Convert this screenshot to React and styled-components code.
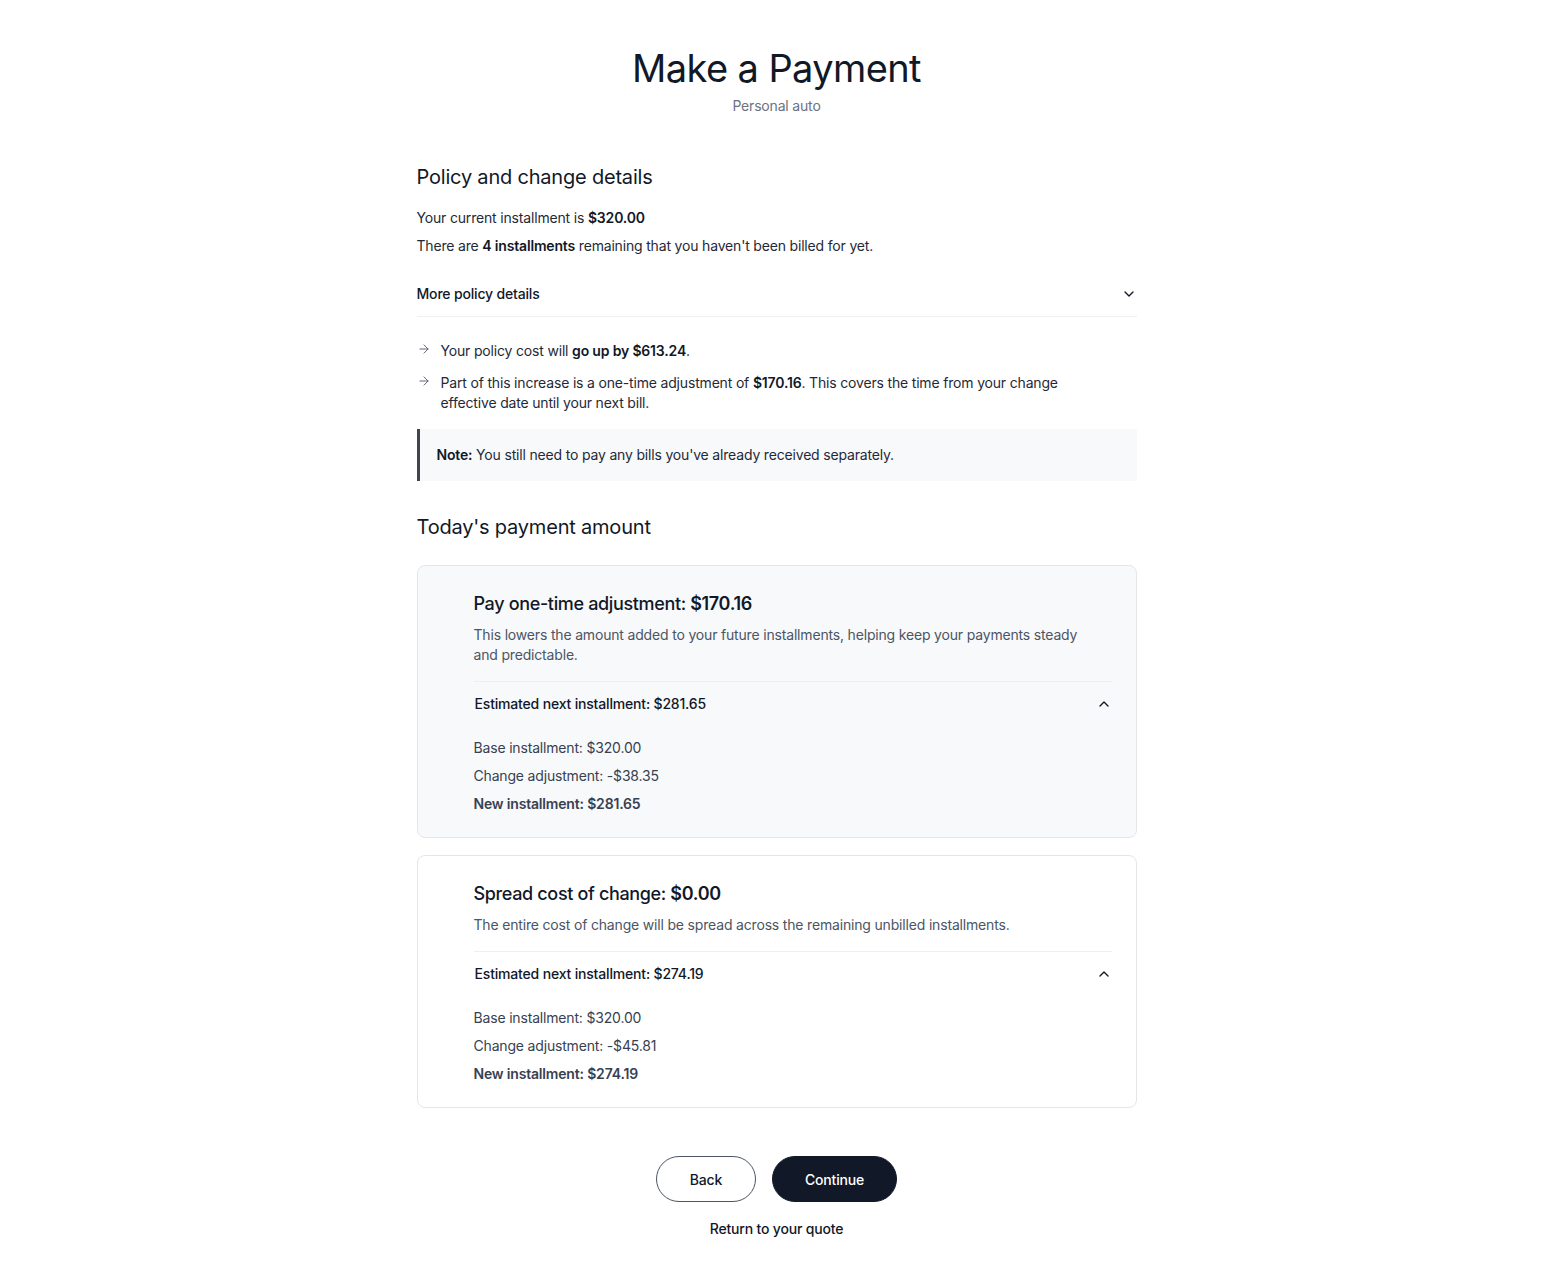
import React from "react";
import styled, { createGlobalStyle } from "styled-components";
import { ChevronDown, ChevronUp, ArrowRight } from "lucide-react";

const GlobalStyle = createGlobalStyle`
  body {
    margin: 0;
    background: #ffffff;
    font-family: Inter, "Noto Sans", Arial, sans-serif;
    color: #111827;
    letter-spacing: -0.011em;
    -webkit-font-smoothing: antialiased;
  }
`;

const options = [
  {
    label: "Pay one-time adjustment:",
    amount: "$170.16",
    text: "This lowers the amount added to your future installments, helping keep your payments steady and predictable.",
    estimate: "$281.65",
    base: "$320.00",
    change: "-$38.35",
    selected: true,
  },
  {
    label: "Spread cost of change:",
    amount: "$0.00",
    text: "The entire cost of change will be spread across the remaining unbilled installments.",
    estimate: "$274.19",
    base: "$320.00",
    change: "-$45.81",
    selected: false,
  },
];

const App = () => {
  return (
    <>
      <GlobalStyle />
      <Page>
        <Header>
          <Title>Make a Payment</Title>
          <Subtitle>Personal auto</Subtitle>
        </Header>

        <Section>
          <SectionTitle>Policy and change details</SectionTitle>
          <Lines>
            <Line>
              Your current installment is <b>$320.00</b>
            </Line>
            <Line>
              There are <b>4 installments</b> remaining that you haven't been
              billed for yet.
            </Line>
          </Lines>
          <Disclosure>
            More policy details
            <ChevronDown size={16} strokeWidth={2} color="#111827" />
          </Disclosure>
          <Bullets>
            <Bullet>
              <ArrowRight size={14} strokeWidth={1.5} color="#4b5563" />
              <span>
                Your policy cost will <b>go up by $613.24</b>.
              </span>
            </Bullet>
            <Bullet>
              <ArrowRight size={14} strokeWidth={1.5} color="#4b5563" />
              <span>
                Part of this increase is a one-time adjustment of{" "}
                <b>$170.16</b>. This covers the time from your change effective
                date until your next bill.
              </span>
            </Bullet>
          </Bullets>
          <Note>
            <b>Note:</b> You still need to pay any bills you've already
            received separately.
          </Note>
        </Section>

        <Section $gap={32}>
          <SectionTitle>Today's payment amount</SectionTitle>
          <Cards>
            {options.map((o) => (
              <Card key={o.label} $selected={o.selected}>
                <CardTitle>
                  {o.label} <strong>{o.amount}</strong>
                </CardTitle>
                <CardText>{o.text}</CardText>
                <EstimateToggle>
                  Estimated next installment: {o.estimate}
                  <ChevronUp size={16} strokeWidth={2} color="#111827" />
                </EstimateToggle>
                <Breakdown>
                  <BreakdownItem>Base installment: {o.base}</BreakdownItem>
                  <BreakdownItem>Change adjustment: {o.change}</BreakdownItem>
                  <BreakdownItem $bold>
                    New installment: {o.estimate}
                  </BreakdownItem>
                </Breakdown>
              </Card>
            ))}
          </Cards>
        </Section>

        <Actions>
          <Buttons>
            <Button>Back</Button>
            <Button $primary>Continue</Button>
          </Buttons>
          <TextLink>Return to your quote</TextLink>
        </Actions>
      </Page>
    </>
  );
};

const Page = styled.main`
  width: 720px;
  margin: 0 auto;
  padding: 44px 0 40px;
  display: flex;
  flex-direction: column;
`;

const Header = styled.header`
  display: flex;
  flex-direction: column;
  align-items: center;
  gap: 4px;
  margin-bottom: 47px;
`;

const Title = styled.h1`
  margin: 0;
  font-size: 38px;
  line-height: 48px;
  font-weight: 400;
  letter-spacing: -0.6px;
  color: #111827;
`;

const Subtitle = styled.p`
  margin: 0;
  font-size: 14px;
  line-height: 20px;
  color: #6b7280;
`;

const Section = styled.section`
  display: flex;
  flex-direction: column;
  margin-top: ${(p) => (p.$gap ? p.$gap : 0)}px;
`;

const SectionTitle = styled.h2`
  margin: 0;
  font-size: 20px;
  line-height: 28px;
  font-weight: 400;
  letter-spacing: -0.2px;
  color: #111827;
`;

const Lines = styled.div`
  display: flex;
  flex-direction: column;
  gap: 8px;
  margin-top: 17px;
`;

const Line = styled.p`
  margin: 0;
  font-size: 14px;
  line-height: 20px;
  color: #1f2937;
  b {
    font-weight: 600;
    color: #111827;
  }
`;

const Disclosure = styled.div`
  display: flex;
  align-items: center;
  justify-content: space-between;
  margin-top: 16px;
  padding: 12px 0;
  font-size: 14px;
  line-height: 20px;
  font-weight: 500;
  color: #111827;
  border-bottom: 1px solid #f0f1f3;
`;

const Bullets = styled.ul`
  list-style: none;
  margin: 24px 0 0;
  padding: 0;
  display: flex;
  flex-direction: column;
  gap: 12px;
`;

const Bullet = styled.li`
  display: flex;
  align-items: flex-start;
  gap: 10px;
  font-size: 14px;
  line-height: 20px;
  color: #1f2937;
  svg {
    flex: none;
    margin-top: 1px;
  }
  span {
    padding-right: 60px;
  }
  b {
    font-weight: 600;
    color: #111827;
  }
`;

const Note = styled.div`
  margin-top: 16px;
  padding: 16px 16px 16px 17px;
  background: #f8f9fb;
  border-left: 3px solid #3f4651;
  font-size: 14px;
  line-height: 20px;
  color: #1f2937;
  b {
    font-weight: 600;
    color: #111827;
  }
`;

const Cards = styled.div`
  display: flex;
  flex-direction: column;
  gap: 17px;
  margin-top: 24px;
`;

const Card = styled.div`
  display: flex;
  flex-direction: column;
  padding: 24px 24px 23px 56px;
  border: 1px solid #e4e6ea;
  border-radius: 8px;
  background: ${(p) => (p.$selected ? "#f8f9fb" : "#ffffff")};
`;

const CardTitle = styled.h3`
  margin: 0;
  font-size: 18px;
  line-height: 28px;
  font-weight: 500;
  letter-spacing: -0.35px;
  color: #111827;
  strong {
    font-weight: 600;
  }
`;

const CardText = styled.p`
  margin: 7px 0 0;
  padding-right: 20px;
  font-size: 14px;
  line-height: 20px;
  color: #4b5563;
`;

const EstimateToggle = styled.div`
  display: flex;
  align-items: center;
  justify-content: space-between;
  margin-top: 16px;
  padding: 12px 0 12px 1px;
  border-top: 1px solid #eceef1;
  font-size: 14px;
  line-height: 20px;
  font-weight: 500;
  color: #111827;
`;

const Breakdown = styled.div`
  display: flex;
  flex-direction: column;
  gap: 8px;
  margin-top: 12px;
`;

const BreakdownItem = styled.p`
  margin: 0;
  font-size: 14px;
  line-height: 20px;
  color: #374151;
  font-weight: ${(p) => (p.$bold ? 600 : 400)};
`;

const Actions = styled.div`
  display: flex;
  flex-direction: column;
  align-items: center;
  gap: 17px;
  margin-top: 48px;
`;

const Buttons = styled.div`
  display: flex;
  gap: 16px;
`;

const Button = styled.button`
  height: 46px;
  padding: 0 32px;
  min-width: ${(p) => (p.$primary ? 124 : 100)}px;
  border-radius: 999px;
  font-family: inherit;
  font-size: 14px;
  font-weight: 500;
  letter-spacing: inherit;
  cursor: pointer;
  border: ${(p) => (p.$primary ? "1.5px solid #111827" : "1.5px solid #4b5563")};
  background: ${(p) => (p.$primary ? "#111827" : "#ffffff")};
  color: ${(p) => (p.$primary ? "#ffffff" : "#111827")};
`;

const TextLink = styled.a`
  font-size: 14px;
  line-height: 20px;
  font-weight: 500;
  color: #111827;
  cursor: pointer;
`;

export default App;
